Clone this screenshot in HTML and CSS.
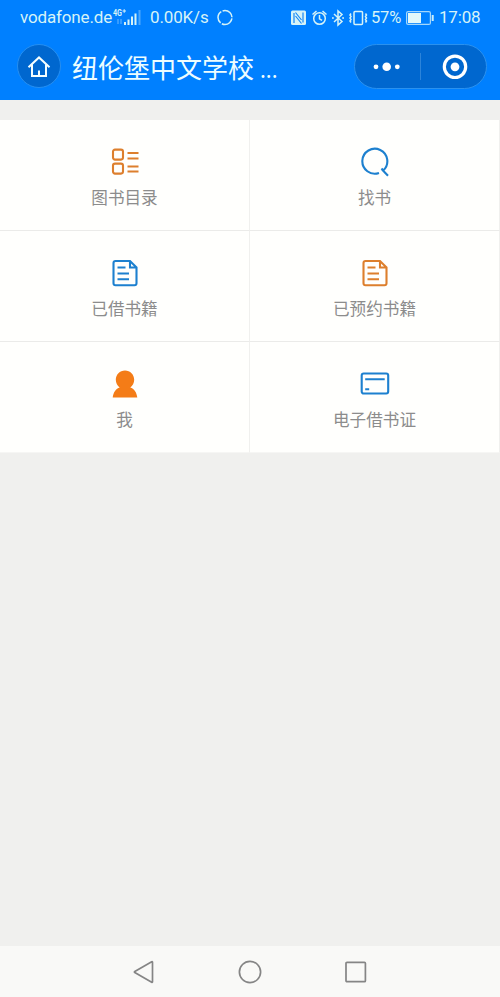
FILE: index.html
```html
<!DOCTYPE html>
<html lang="zh-CN">
<head>
<meta charset="utf-8">
<title>纽伦堡中文学校</title>
<link rel="stylesheet" href="styles.css">
</head>
<body>
<div class="screen">
  <header class="top">
    <div class="status">
      <span class="carrier">vodafone.de</span>
      <svg class="signal" width="28" height="20" viewBox="0 0 28 20">
        <text class="net" x="0" y="8" textLength="9" lengthAdjust="spacingAndGlyphs">4G</text>
        <path d="M9.500 3h3.500M11.200 1.200v3.600" stroke="#d6f3f7" stroke-width="1"/>
        <path d="M5 11v5M8 11v5" stroke="#5aafff" stroke-width="1.200"/>
        <path d="M12 14v3M15.500 11.500v5.500M19 8.500v8.500M22.500 5.500v11.500" stroke="#d6f3f7" stroke-width="2"/>
        <path d="M26.500 2v15" stroke="#4ea8fb" stroke-width="2"/>
      </svg>
      <span class="speed">0.00K/s</span>
      <svg class="ring" width="18" height="18" viewBox="0 0 18 18" fill="none" stroke="#d6f3f7" stroke-width="1.500"><circle cx="9" cy="8.500" r="7" stroke-dasharray="13.200 1.460" stroke-dashoffset="-1"/></svg>
      <svg class="sys" width="80" height="20" viewBox="0 0 80 20">
        <rect x="1" y="2.500" width="15" height="14.500" rx="1.500" fill="#d6f3f7"/>
        <path d="M4 5v10M13 4.500v10M5.500 4.500l6 7.500M5.500 8l6 7.500" stroke="#1688f6" stroke-width="1.200"/>
        <g fill="none" stroke="#d6f3f7" stroke-width="1.500">
        <circle cx="29.500" cy="10.500" r="5.800"/><path d="M29.500 7v3.800l2.500 1.500M22.500 6.500l4-3.500M36.500 6.500l-4-3.500"/>
        <path d="M44 6l8 7.500-4 3.500V3l4 3.500-8 7.500" stroke-width="1.500"/><path d="M42 10h1.800M52.200 10h1.800"/>
        <rect x="64" y="3.500" width="8.500" height="13" rx="1"/><path d="M61 5.500l-1 1.500 1 1.500-1 1.500 1 1.500-1 1.500 1 1.500M75.500 5.500l1 1.500-1 1.500 1 1.500-1 1.500 1 1.500-1 1.500"/>
        </g>
      </svg>
      <span class="percent">57%</span>
      <svg class="battery" width="28" height="14" viewBox="0 0 28 14"><rect x=".6" y=".6" width="23.800" height="12.800" rx="1.500" fill="none" stroke="#a4d7fb" stroke-width="1.200"/><rect x="2" y="2" width="13" height="10" fill="#e2f8fa"/><path d="M26.700 4v6" stroke="#c9ecfa" stroke-width="2"/></svg>
      <span class="clock">17:08</span>
    </div>
    <div class="bar">
      <div class="home"><svg width="24" height="24" viewBox="0 0 24 24" fill="none" stroke="#f4feff" stroke-width="2"><path d="M1.500 13.200L12 3.400l10.500 9.800M5 10.700V22h14V10.700M12 22v-5.500"/></svg></div>
      <h1>纽伦堡中文学校<span class="dots">...</span></h1>
      <div class="capsule">
        <svg width="28" height="10" viewBox="0 0 28 10" fill="#fff"><circle cx="3" cy="4.800" r="2.400"/><circle cx="13.700" cy="4.800" r="4.300"/><circle cx="24.300" cy="4.800" r="2.400"/></svg>
        <i></i>
        <svg width="26" height="26" viewBox="0 0 26 26"><circle cx="13" cy="12.800" r="10.700" fill="none" stroke="#fff" stroke-width="3.200"/><circle cx="13" cy="12.800" r="4.400" fill="#fff"/></svg>
      </div>
    </div>
  </header>
  <main class="grid">
    <div class="cell"><svg class="orange" viewBox="0 0 32 32"><rect x="4" y="3.600" width="10" height="10" rx="2"/><rect x="4" y="17.600" width="10" height="10" rx="2"/><path d="M18.500 7h11M18.500 12.500h11M18.500 20.500h11M18.500 25.500h11"/></svg><span>图书目录</span></div>
    <div class="cell"><svg class="blue" viewBox="0 0 32 32"><path d="M20 27A12.500 12.500 0 1 1 24.200 24.500L22.500 22.500M23 23.500l6 6.200"/></svg><span>找书</span></div>
    <div class="cell"><svg class="blue" viewBox="0 0 32 32"><path d="M6.500 4H21l6.500 6.500v15.700q0 2-2 2h-19q-2 0-2-2V6q0-2 2-2zM21 4v6.500h6.500M8.500 10.500h8M8.500 16.500h11.500M8.500 22.300h11.500"/></svg><span>已借书籍</span></div>
    <div class="cell"><svg class="orange" viewBox="0 0 32 32"><path d="M6.500 4H21l6.500 6.500v15.700q0 2-2 2h-19q-2 0-2-2V6q0-2 2-2zM21 4v6.500h6.500M8.500 10.500h8M8.500 16.500h11.500M8.500 22.300h11.500"/></svg><span>已预约书籍</span></div>
    <div class="cell"><svg viewBox="0 0 32 32"><path fill="#f47c17" d="M16 2.500c5.200 0 9.200 4.100 9.200 9.300 0 3.300-1.600 6-3.900 7.600 3.700 1.300 6.400 4.600 7 10.100H3.700c.6-5.500 3.300-8.800 7-10.100-2.300-1.600-3.900-4.300-3.900-7.600 0-5.200 4-9.300 9.200-9.300z"/></svg><span>我</span></div>
    <div class="cell"><svg class="blue" viewBox="0 0 32 32"><rect x="2.700" y="5.500" width="26.500" height="20" rx="2"/><path d="M6.200 11.200h19.500M6.200 21.300h4"/></svg><span>电子借书证</span></div>
  </main>
  <nav class="nav">
    <svg width="24" height="24" viewBox="0 0 24 24"><path d="M20.500 2.200v19.600q0 .8-.8.400L2.800 12.600q-.8-.6 0-1.200L19.700 1.800q.8-.4.800.4z"/></svg>
    <svg width="24" height="24" viewBox="0 0 24 24"><circle cx="12" cy="12" r="10.600"/></svg>
    <svg width="24" height="24" viewBox="0 0 24 24"><rect x="2" y="2.300" width="19.400" height="19.400" rx="1"/></svg>
  </nav>
</div>
</body>
</html>
```
FILE: styles.css
```css
* { box-sizing: border-box; }
body { margin: 0; font-family: Roboto, "Noto Sans CJK SC", sans-serif; }
svg { display: block; flex: none; }
.screen { height: 997px; display: flex; flex-direction: column; background: #f0f0ee; }
.top { height: 100px; background: #0080ff; }
.status { height: 35px; padding: 0 19px 0 20px; display: flex; align-items: center; color: #d6f3f7; font-size: 17px; line-height: 35px; white-space: nowrap; }
.carrier { width: 92px; letter-spacing: -.15px; }
.signal { margin-left: 1px; }
.net { font: bold 9px Roboto, sans-serif; fill: #d6f3f7; }
.speed { width: 59px; margin-left: 9px; letter-spacing: -.15px; }
.ring { margin-left: 7px; }
.sys { margin-left: 56px; }
.percent { width: 31px; margin-left: 1px; font-size: 16.5px; letter-spacing: -.2px; }
.battery { margin-left: 4px; }
.clock { width: 42px; margin-left: auto; font-size: 17px; letter-spacing: -.2px; }
.bar { height: 65px; padding: 9px 13px 0 17px; display: flex; align-items: flex-start; }
.home { width: 44px; height: 44px; display: grid; place-items: center; border: 1px solid #268ff1; border-radius: 50%; background: #0067cf; }
h1 { flex: 1; margin: 0 0 0 11px; font: 400 26px/46px "Noto Sans CJK SC", sans-serif; color: #edfdff; white-space: nowrap; }
.dots { margin-left: 6px; font-size: 21px; }
.capsule { width: 133px; height: 45px; display: flex; align-items: center; border: 1px solid #2b91ee; border-radius: 23px; background: #0067cf; padding-left: 18px; }
.capsule i { width: 1px; height: 27px; margin: 0 21px 0 19px; background: #2c84da; }
.grid { margin-top: 20px; display: grid; grid-template-columns: 250px 250px; grid-auto-rows: 111px; background: #fff; }
.cell { display: flex; flex-direction: column; align-items: center; padding-top: 26px; border-right: 1px solid #f0f0ee; border-bottom: 1px solid #ebebe9; background: #fffffd; color: #8c8c8c; font: 400 16.6px/24px "Noto Sans CJK SC", sans-serif; }
.cell:nth-last-child(-n+2) { border-bottom-color: #f6f6f4; }
.cell svg { width: 32px; height: 32px; margin-bottom: 7px; }
.orange, .blue { fill: none; stroke-width: 2.1; }
.orange { stroke: #dd7f2d; }
.blue { stroke: #1d80cf; }
.nav { height: 51px; margin-top: auto; padding: 1px 132px 0; display: flex; align-items: center; justify-content: space-between; background: #f9f9f7; }
.nav svg { fill: none; stroke: #858585; stroke-width: 1.7; }
```
